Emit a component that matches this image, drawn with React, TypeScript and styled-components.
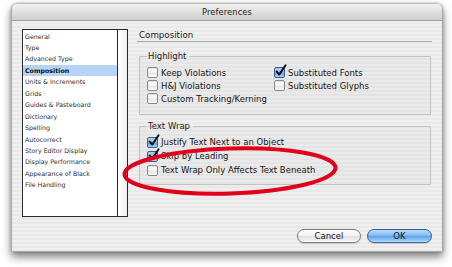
import React from "react";
import styled, { createGlobalStyle } from "styled-components";

const Global = createGlobalStyle`
  *, *::before, *::after { box-sizing: border-box; }
  html, body { margin: 0; padding: 0; background: #ffffff; }
  body { font-family: "DejaVu Sans", "Liberation Sans", sans-serif; }
`;

const Stage = styled.div`
  position: relative;
  width: 452px;
  height: 267px;
  overflow: hidden;
  background: #ffffff;
  padding: 3px 0 0 11px;
`;

const Window = styled.div`
  width: 432px;
  height: 249px;
  display: flex;
  flex-direction: column;
  border: 1px solid #a8a8a8;
  border-top-color: #bcbcbc;
  border-radius: 6px 6px 2px 2px;
  overflow: hidden;
  box-shadow: 0 5px 9px rgba(0, 0, 0, 0.5), 0 0 3px rgba(0, 0, 0, 0.22);
  background: repeating-linear-gradient(
    to bottom,
    #efefef 0px,
    #efefef 2px,
    #e9e9e9 2px,
    #e9e9e9 4px
  );
`;

const TitleBar = styled.div`
  height: 17px;
  flex: none;
  display: flex;
  align-items: center;
  justify-content: center;
  background: linear-gradient(to bottom, #f2f2f2 0%, #dedede 55%, #cdcdcd 100%);
  border-bottom: 1px solid #a0a0a0;
  font-size: 8.3px;
  color: #1e1e1e;
  letter-spacing: 0.1px;
`;

const Body = styled.div`
  flex: 1;
  display: flex;
  flex-direction: column;
  padding: 8px 10px 8px 10px;
`;

const Content = styled.div`
  display: flex;
  height: 188px;
`;

const ListBox = styled.div`
  width: 106px;
  height: 188px;
  display: flex;
  border: 1px solid #2a2a2a;
  background: #ffffff;
`;

const Items = styled.ul`
  flex: 1;
  margin: 0;
  padding: 0.5px 0 0 0;
  list-style: none;
`;

const Item = styled.li<{ $selected?: boolean }>`
  height: 11.46px;
  line-height: 11.46px;
  padding-left: 2px;
  font-size: 6.3px;
  font-weight: ${(p) => (p.$selected ? 700 : 400)};
  color: ${(p) => (p.$selected ? "#0a0a0a" : "#2e2e2e")};
  background: ${(p) => (p.$selected ? "#b6d4f8" : "transparent")};
  white-space: nowrap;
`;

const ScrollTrack = styled.div`
  width: 10px;
  border-left: 1px solid #2a2a2a;
  background: linear-gradient(to right, #ffffff, #f1f1f1);
`;

const Pane = styled.div`
  margin-left: 9px;
  width: 295px;
  display: flex;
  flex-direction: column;
`;

const Heading = styled.div`
  height: 13px;
  line-height: 12px;
  padding-left: 2px;
  border-bottom: 1px solid #a9a9a9;
  font-size: 8.7px;
  color: #1a1a1a;
`;

const Group = styled.fieldset<{ $top: number; $padTop: number; $padBottom: number }>`
  margin: ${(p) => p.$top}px 1px 0 2px;
  min-width: 0;
  padding: ${(p) => p.$padTop}px 7px ${(p) => p.$padBottom}px 7px;
  border: 1px solid #c2c2c2;
  border-radius: 1px;
  background: rgba(0, 0, 0, 0.02);
`;

const Legend = styled.legend`
  padding: 0 3px 0 1px;
  line-height: 10px;
  height: 10px;
  font-size: 8.5px;
  color: #1a1a1a;
`;

const OptionGrid = styled.div<{ $row: number }>`
  display: grid;
  grid-template-columns: 127px auto;
  grid-auto-rows: ${(p) => p.$row}px;
`;

const Option = styled.label<{ $col?: number; $rowIndex?: number }>`
  display: flex;
  align-items: center;
  gap: 3px;
  font-size: 8.5px;
  color: #151515;
  white-space: nowrap;
  grid-column: ${(p) => p.$col ?? 1};
  grid-row: ${(p) => p.$rowIndex ?? "auto"};
`;

const Box = styled.span<{ $checked?: boolean }>`
  position: relative;
  width: 11px;
  height: 11px;
  flex: none;
  border: 1px solid ${(p) => (p.$checked ? "#3a5f8e" : "#8a8a8a")};
  border-radius: 2px;
  background: ${(p) =>
    p.$checked
      ? "linear-gradient(to bottom, #c9e3fb 0%, #7fb3ea 50%, #5c9ce0 52%, #a8d6ff 100%)"
      : "linear-gradient(to bottom, #ffffff 0%, #f2f2f2 50%, #e3e3e3 52%, #fbfbfb 100%)"};
  box-shadow: inset 0 1px 1px rgba(0, 0, 0, 0.12);
`;

const Check = styled.svg`
  position: absolute;
  left: 0px;
  top: -3px;
  overflow: visible;
`;

const Footer = styled.div`
  margin-top: 12px;
  display: flex;
  justify-content: flex-end;
  gap: 6px;
`;

const Button = styled.button<{ $default?: boolean; $w: number }>`
  width: ${(p) => p.$w}px;
  height: 14px;
  padding: 0;
  border-radius: 7px;
  font-family: "DejaVu Sans", "Liberation Sans", sans-serif;
  font-size: 8.5px;
  line-height: 12px;
  color: #111;
  border: 1px solid ${(p) => (p.$default ? "#3d5f91" : "#7d7d7d")};
  background: ${(p) =>
    p.$default
      ? "linear-gradient(to bottom, #bcdcfb 0%, #83bbf1 45%, #5fa2ea 52%, #8cc7fb 85%, #bfe3ff 100%)"
      : "linear-gradient(to bottom, #ffffff 0%, #f3f3f3 45%, #e2e2e2 52%, #f0f0f0 85%, #ffffff 100%)"};
  box-shadow: 0 1px 1px rgba(0, 0, 0, 0.15);
`;

const Annotation = styled.svg`
  position: absolute;
  left: 112px;
  top: 138px;
  pointer-events: none;
`;

const listItems = [
  "General",
  "Type",
  "Advanced Type",
  "Composition",
  "Units & Increments",
  "Grids",
  "Guides & Pasteboard",
  "Dictionary",
  "Spelling",
  "Autocorrect",
  "Story Editor Display",
  "Display Performance",
  "Appearance of Black",
  "File Handling",
];

function CheckBox({ checked }: { checked?: boolean }) {
  return (
    <Box $checked={checked}>
      {checked && (
        <Check width="11" height="11" viewBox="0 0 11 11">
          <path
            d="M1.6 6.4 L4.2 9.6 L10.6 0.2"
            fill="none"
            stroke="#0b0b0b"
            strokeWidth="1.9"
            strokeLinecap="round"
            strokeLinejoin="round"
          />
        </Check>
      )}
    </Box>
  );
}

export default function App() {
  return (
    <>
      <Global />
      <Stage>
        <Window>
          <TitleBar>Preferences</TitleBar>
          <Body>
            <Content>
              <ListBox>
                <Items>
                  {listItems.map((t) => (
                    <Item key={t} $selected={t === "Composition"}>
                      {t}
                    </Item>
                  ))}
                </Items>
                <ScrollTrack />
              </ListBox>
              <Pane>
                <Heading>Composition</Heading>
                <Group $top={9} $padTop={5} $padBottom={9}>
                  <Legend>Highlight</Legend>
                  <OptionGrid $row={13}>
                    <Option $col={1} $rowIndex={1}>
                      <CheckBox />
                      Keep Violations
                    </Option>
                    <Option $col={2} $rowIndex={1}>
                      <CheckBox checked />
                      Substituted Fonts
                    </Option>
                    <Option $col={1} $rowIndex={2}>
                      <CheckBox />
                      H&amp;J Violations
                    </Option>
                    <Option $col={2} $rowIndex={2}>
                      <CheckBox />
                      Substituted Glyphs
                    </Option>
                    <Option $col={1} $rowIndex={3}>
                      <CheckBox />
                      Custom Tracking/Kerning
                    </Option>
                  </OptionGrid>
                </Group>
                <Group $top={6} $padTop={4} $padBottom={7}>
                  <Legend>Text Wrap</Legend>
                  <OptionGrid $row={14}>
                    <Option>
                      <CheckBox checked />
                      Justify Text Next to an Object
                    </Option>
                    <Option>
                      <CheckBox checked />
                      Skip by Leading
                    </Option>
                    <Option>
                      <CheckBox />
                      Text Wrap Only Affects Text Beneath
                    </Option>
                  </OptionGrid>
                </Group>
              </Pane>
            </Content>
            <Footer>
              <Button $w={64}>Cancel</Button>
              <Button $w={65} $default>
                OK
              </Button>
            </Footer>
          </Body>
        </Window>
        <Annotation width="236" height="66" viewBox="0 0 236 66">
          <ellipse
            cx="118"
            cy="33"
            rx="105.5"
            ry="22.5"
            fill="none"
            stroke="#e1001a"
            strokeWidth="4"
            transform="rotate(-1.8 118 33)"
          />
        </Annotation>
      </Stage>
    </>
  );
}
